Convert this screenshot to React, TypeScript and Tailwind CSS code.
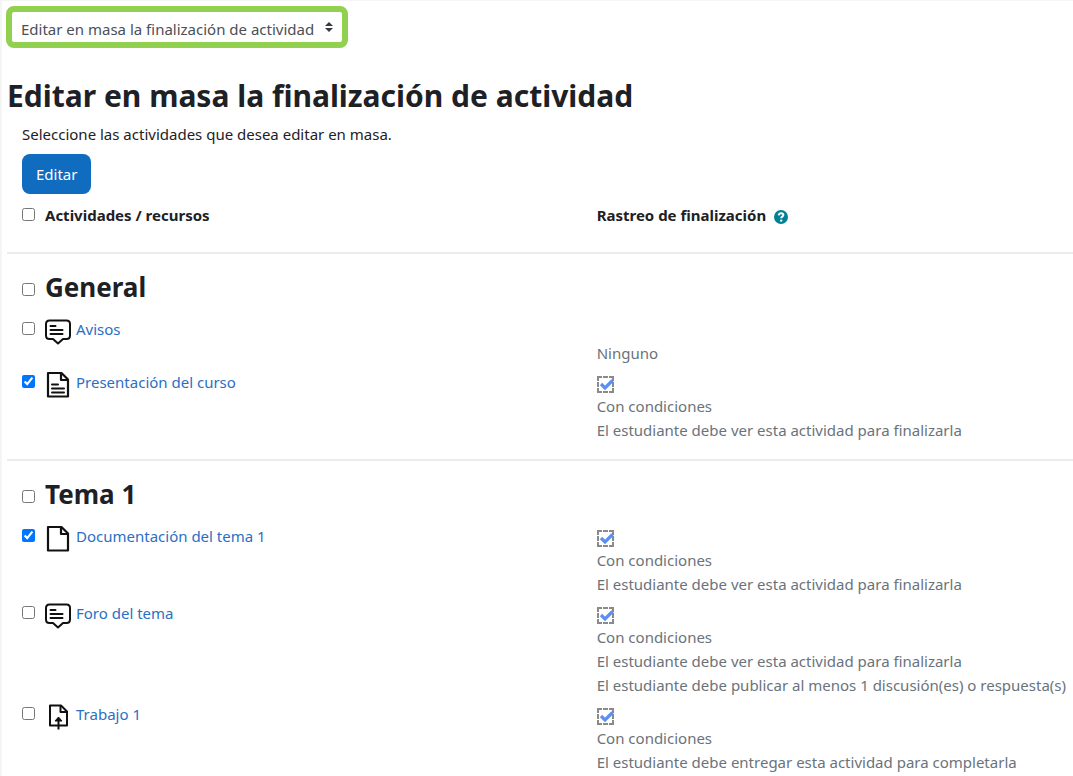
import { useState } from 'react';

type ActivityKind = 'forum' | 'page' | 'file' | 'assign';

interface Activity {
  id: string;
  name: string;
  kind: ActivityKind;
  checked?: boolean;
  conditions: string[];
}

interface Section {
  id: string;
  title: string;
  activities: Activity[];
}

const sections: Section[] = [
  {
    id: 'general',
    title: 'General',
    activities: [
      { id: 'avisos', name: 'Avisos', kind: 'forum', conditions: [] },
      {
        id: 'presentacion',
        name: 'Presentación del curso',
        kind: 'page',
        checked: true,
        conditions: ['El estudiante debe ver esta actividad para finalizarla'],
      },
    ],
  },
  {
    id: 'tema-1',
    title: 'Tema 1',
    activities: [
      {
        id: 'documentacion',
        name: 'Documentación del tema 1',
        kind: 'file',
        checked: true,
        conditions: ['El estudiante debe ver esta actividad para finalizarla'],
      },
      {
        id: 'foro',
        name: 'Foro del tema',
        kind: 'forum',
        conditions: [
          'El estudiante debe ver esta actividad para finalizarla',
          'El estudiante debe publicar al menos 1 discusión(es) o respuesta(s)',
        ],
      },
      {
        id: 'trabajo',
        name: 'Trabajo 1',
        kind: 'assign',
        conditions: ['El estudiante debe entregar esta actividad para completarla'],
      },
    ],
  },
];

function ActivityIcon({ kind }: { kind: ActivityKind }) {
  return (
    <svg
      viewBox="0 0 26 28"
      className="mt-px h-7 w-[26px] shrink-0"
      fill="none"
      stroke="#111"
      strokeWidth="2"
      strokeLinejoin="round"
      aria-hidden="true"
    >
      {kind === 'forum' && (
        <>
          <path d="M4.500 2.500h17C23.500 2.500 25 4 25 6v11.500c0 2-1.500 3.500-3.500 3.500H18L13 25.500 8 21H4.500C2.500 21 1 19.500 1 17.500V6C1 4 2.500 2.500 4.500 2.500z" />
          <path d="M5.500 8h5M5.500 12h12M5.500 16h12" strokeLinecap="round" />
        </>
      )}
      {(kind === 'page' || kind === 'file') && (
        <>
          <path d="M3 2h13.500L23 8.500V25.500H3z" strokeWidth="2.200" />
          <path d="M16 2v7H23" strokeWidth="2.200" />
        </>
      )}
      {kind === 'page' && <path d="M7 13.500h6M7 17.500h12M7 21.500h12" strokeLinecap="round" />}
      {kind === 'assign' && (
        <>
          <path d="M5 2.500h11l6 6V22.500H5z" />
          <path d="M15.500 2.500v6.500h6.500M13.500 26.500V16" />
          <path d="M13.500 14l3.500 4h-7z" fill="#111" strokeWidth="1" />
        </>
      )}
    </svg>
  );
}

function CompletionIcon() {
  return (
    <svg viewBox="0 0 17 17" className="h-[17px] w-[17px]" fill="none" role="img" aria-label="Con condiciones">
      <path
        d="M1 5V1H5M6 1H11M12 1H16V5M16 6V11M16 12V16H12M11 16H6M5 16H1V12M1 11V6"
        stroke="#8a8a8a"
        strokeWidth="2"
      />
      <path d="M4 8l4 4L15.500 4.500" stroke="#5b8ff5" strokeWidth="3.200" />
    </svg>
  );
}

function ActivityRow({ activity }: { activity: Activity }) {
  const tracked = activity.conditions.length > 0;

  return (
    <div className="flex pb-[5px]">
      <div className="flex w-[54%] shrink-0 items-start pl-[15px]">
        <input
          type="checkbox"
          defaultChecked={activity.checked}
          aria-label={activity.name}
          className="mt-[5px] mr-2.5 h-[13px] w-[13px] shrink-0"
        />
        <ActivityIcon kind={activity.kind} />
        <a href="#" className="ml-[5px] text-[#2a6fc4] hover:underline">
          {activity.name}
        </a>
      </div>
      <div className="min-w-0 flex-1 pl-3.5 text-[#6a737b]">
        <div className="flex h-6 items-center pt-1">{tracked && <CompletionIcon />}</div>
        <p>{tracked ? 'Con condiciones' : 'Ninguno'}</p>
        {activity.conditions.map((condition) => (
          <p key={condition}>{condition}</p>
        ))}
      </div>
    </div>
  );
}

function SectionBlock({ section }: { section: Section }) {
  return (
    <section className="border-t-2 border-[#ececec] pt-[15px] pb-3">
      <div className="mb-3 flex items-center pl-[15px]">
        <input
          type="checkbox"
          id={`section-${section.id}`}
          className="mt-[5px] mr-2.5 h-[13px] w-[13px] shrink-0"
        />
        <h3 className="text-[26px] leading-9 font-bold">
          <label htmlFor={`section-${section.id}`}>{section.title}</label>
        </h3>
      </div>
      {section.activities.map((activity) => (
        <ActivityRow key={activity.id} activity={activity} />
      ))}
    </section>
  );
}

export default function App() {
  const [view, setView] = useState('bulk');

  return (
    <main className="min-h-screen border-t border-l-2 border-[#f5f5f5] bg-white pt-[5px] pl-[5px] font-['Noto_Sans','Open_Sans',sans-serif] text-[15px] leading-6 text-[#1d2125]">
      <div className="relative -ml-px inline-block">
        <select
          aria-label="Navegación de finalización"
          value={view}
          onChange={(e) => setView(e.target.value)}
          className="block h-[42px] appearance-none rounded-lg border-[6px] border-[#92d050] bg-white pt-1 pr-[27px] pl-[9px] text-[#495057]"
        >
          <option value="bulk">Editar en masa la finalización de actividad</option>
        </select>
        <svg viewBox="0 0 8 10" className="pointer-events-none absolute top-4 right-[15px] h-2.5 w-2" aria-hidden="true">
          <path d="M4 0L8 4H0zM4 10L0 6h8z" fill="#343a40" />
        </svg>
      </div>

      <h1 className="mt-7 text-[30px] leading-10 font-bold">Editar en masa la finalización de actividad</h1>
      <p className="mt-1.5 pl-[15px]">Seleccione las actividades que desea editar en masa.</p>
      <div className="mt-2 pl-[15px]">
        <button type="button" className="block h-10 rounded-lg bg-[#0f6cbf] px-3.5 text-white">
          Editar
        </button>
      </div>

      <div className="mt-[9px] mb-[25px] flex font-bold">
        <div className="flex w-[54%] shrink-0 items-start pl-[15px]">
          <input type="checkbox" id="select-all" className="mt-[5px] mr-2.5 h-[13px] w-[13px] shrink-0" />
          <label htmlFor="select-all">Actividades / recursos</label>
        </div>
        <div className="flex flex-1 items-center gap-2 pl-3.5">
          <span>Rastreo de finalización</span>
          <button type="button" aria-label="Ayuda con Rastreo de finalización" className="mt-1">
            <svg viewBox="0 0 14 14" className="block h-3.5 w-3.5" fill="none" aria-hidden="true">
              <circle cx="7" cy="7" r="7" fill="#008196" />
              <path d="M4.700 5.300C4.900 3.900 5.800 3.200 7.100 3.200c1.400 0 2.300.8 2.300 1.900 0 1.600-2.200 1.500-2.200 3.100" stroke="#fff" strokeWidth="1.900" />
              <circle cx="7.200" cy="10.600" r="1.200" fill="#fff" />
            </svg>
          </button>
        </div>
      </div>

      {sections.map((section) => (
        <SectionBlock key={section.id} section={section} />
      ))}
    </main>
  );
}
